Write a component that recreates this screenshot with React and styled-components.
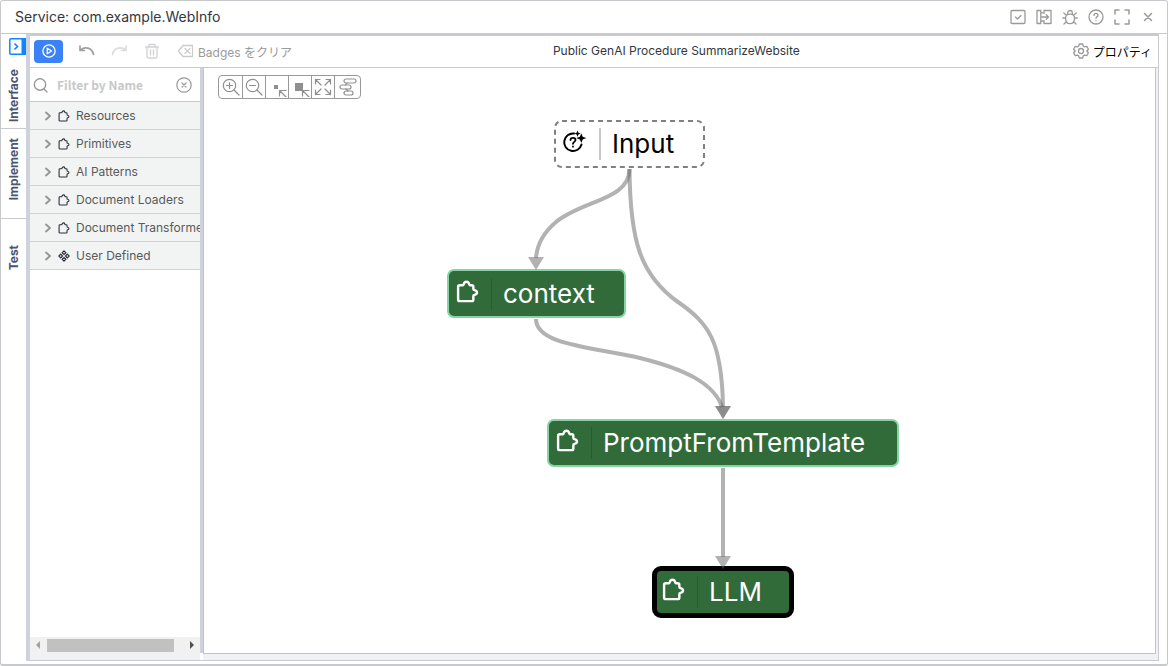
import React, { useState } from "react";
import styled, { createGlobalStyle, css } from "styled-components";

const Global = createGlobalStyle`
  * { box-sizing: border-box; }
  body {
    margin: 0;
    background: #fff;
    font-family: Inter, "Noto Sans CJK JP", sans-serif;
    font-size: 12px;
    color: #3a3f47;
  }
  button { font: inherit; color: inherit; background: none; border: 0; padding: 0; margin: 0; }
  svg { display: block; }
`;

const Window = styled.div`
  display: flex;
  flex-direction: column;
  min-height: 100vh;
  border: 1px solid #c8c9cc;
  border-bottom-width: 2px;
  border-radius: 3px;
`;

const TitleBar = styled.header`
  display: flex;
  align-items: center;
  justify-content: space-between;
  height: 33px;
  padding: 0 11px 0 14px;
  border-bottom: 1px solid #c8cad0;
`;

const Title = styled.h1`
  margin: 0;
  font-size: 14px;
  font-weight: 400;
  line-height: 20px;
  color: #33373d;
`;

const WindowActions = styled.div`
  display: flex;
  gap: 10px;
`;

const IconButton = styled.button`
  display: flex;
  align-items: center;
  justify-content: center;
  width: 16px;
  height: 20px;
  color: #9a9a9a;
`;

const Body = styled.div`
  display: flex;
  flex: 1;
`;

const TabRail = styled.nav`
  display: flex;
  flex-direction: column;
  width: 25px;
  flex: none;
`;

const RailToggle = styled.button`
  align-self: flex-end;
  width: 17px;
  height: 17px;
  margin: 4px 0 8px;
`;

const Tab = styled.button`
  display: flex;
  align-items: center;
  justify-content: center;
  height: ${(p) => p.$height}px;
  padding-bottom: ${(p) => p.$pad || 0}px;
  border-bottom: ${(p) => (p.$last ? "0" : "1px solid #c8cad0")};
  writing-mode: vertical-rl;
  font-size: 12px;
  font-weight: 700;
  line-height: 16px;
  color: #4b5571;
  span { transform: rotate(180deg); }
`;

const Workspace = styled.div`
  flex: 1;
  min-width: 0;
  display: flex;
  flex-direction: column;
  margin: 0 8px 3px 0;
  border-left: 4px solid #cfd2da;
`;

const Editor = styled.div`
  flex: 1;
  display: flex;
  flex-direction: column;
  border: 1px solid #c8cad0;
  border-top-width: 2px;
  border-left: 0;
`;

const Toolbar = styled.div`
  display: flex;
  align-items: center;
  height: 31px;
  padding: 0 6px 1px 4px;
`;

const ToolGroup = styled.div`
  display: flex;
  align-items: center;
  gap: 16px;
`;

const RunButton = styled.button`
  display: flex;
  align-items: center;
  justify-content: center;
  width: 29px;
  height: 23px;
  border-radius: 4px;
  background: #3b82f6;
  color: #fff;
`;

const ToolButton = styled.button`
  display: flex;
  align-items: center;
  gap: 4px;
  height: 24px;
  color: ${(p) => p.$color};
`;

const Caption = styled.h2`
  flex: 1;
  margin: 0;
  padding-right: 12px;
  font-size: 12px;
  font-weight: 400;
  line-height: 16px;
  text-align: center;
  color: #33373d;
`;

const PropertiesButton = styled.button`
  display: flex;
  align-items: center;
  gap: 4px;
  color: #000;
  svg { color: #999; }
`;

const Panes = styled.div`
  flex: 1;
  display: flex;
  border-top: 1px solid #c8cad0;
`;

const Column = styled.div`
  flex: 1;
  min-width: 0;
  display: flex;
  flex-direction: column;
  padding: 0 2px 6px 0;
  background: #f0f1f5;
`;

const Palette = styled.aside`
  display: flex;
  flex-direction: column;
  flex: none;
  width: 170px;
  padding-bottom: 7px;
  background: #f0f1f5;
`;

const PaletteBody = styled.div`
  flex: 1;
  background: #fff;
`;

const SearchRow = styled.div`
  display: flex;
  align-items: center;
  height: 34px;
  padding: 0 8px 0 3px;
  border-bottom: 1px solid #c8cad0;
  color: #999;
`;

const SearchInput = styled.input`
  flex: 1;
  min-width: 0;
  margin: 0 0 0 8px;
  padding: 0;
  border: 0;
  outline: 0;
  background: none;
  font: 700 12px/20px "Noto Sans CJK JP", sans-serif;
  &::placeholder { color: #c8c8c8; opacity: 1; }
`;

const GroupList = styled.ul`
  margin: 0;
  padding: 0;
  list-style: none;
`;

const GroupButton = styled.button`
  display: flex;
  align-items: center;
  width: 100%;
  height: 28px;
  padding-left: 14px;
  overflow: hidden;
  border-bottom: 1px solid #cfd2da;
  background: #f1f4f3;
  font-size: 12px;
  line-height: 16px;
  color: #5a5a5a;
  white-space: nowrap;
  svg { flex: none; }
`;

const GroupIcon = styled.span`
  margin: 0 6px;
  color: #2c2f3a;
`;

const ScrollBar = styled.div`
  display: flex;
  align-items: center;
  height: 16px;
  padding: 0 5px;
  background: #f1f1f1;
`;

const ScrollTrack = styled.div`
  flex: 1;
  margin: 0 15px 0 6px;
`;

const ScrollThumb = styled.div`
  height: 13px;
  background: #c1c1c1;
`;

const Splitter = styled.div`
  flex: none;
  width: 3px;
  margin-bottom: 7px;
  background: #cfd2da;
`;

const Canvas = styled.main`
  position: relative;
  flex: 1;
  overflow: hidden;
  border: 1px solid #c0c3cb;
  border-top: 0;
  background: #fff;
`;

const ZoomBar = styled.div`
  display: inline-flex;
  margin: 7px 0 0 14px;
  border: 1px solid #999;
  border-radius: 4px;
`;

const ZoomButton = styled.button`
  display: flex;
  align-items: center;
  justify-content: center;
  width: 23px;
  height: 22px;
  color: #8f8f8f;
  & + & { border-left: 1px solid #999; }
  &:last-child { width: 26px; }
`;

const Edges = styled.svg`
  position: absolute;
  left: 0;
  top: 0;
`;

const nodeKinds = {
  input: css`
    padding-left: 8px;
    color: #000;
    background: #fff;
  `,
  step: css`
    padding-left: 7px;
    border: 2px solid #86d3a4;
    background: #316b3a;
    color: #fff;
  `,
  selected: css`
    padding-left: 5px;
    border: 5px solid #000;
    border-radius: 9px;
    background: #316b3a;
    color: #fff;
  `,
};

const Node = styled.button`
  position: absolute;
  left: ${(p) => p.$x}px;
  top: ${(p) => p.$y}px;
  width: ${(p) => p.$w}px;
  height: ${(p) => p.$h}px;
  display: flex;
  align-items: center;
  border-radius: 7px;
  ${(p) => nodeKinds[p.$kind]}
`;

const DashedFrame = styled.svg`
  position: absolute;
  inset: 0;
`;

const NodeIcon = styled.span`
  width: 25px;
  margin-bottom: 5px;
`;

const NodeLabel = styled.span`
  margin-left: ${(p) => (p.$light ? 12 : 10)}px;
  padding-left: 11px;
  border-left: ${(p) => (p.$light ? "2px solid #c8c8cc" : "1px solid #2b5a3b")};
  font-size: 26px;
  line-height: 32px;
`;

function Glyph({ size = 16, w, h, box = "0 0 16 16", sw = 1.3, children }) {
  return (
    <svg width={w || size} height={h || size} viewBox={box} fill="none" stroke="currentColor"
      strokeWidth={sw} strokeLinecap="round" strokeLinejoin="round" aria-hidden="true">
      {children}
    </svg>
  );
}

const Puzzle = ({ size, sw }) => (
  <Glyph size={size} box="0 0 22 22" sw={sw}>
    <path d="M3.600 5H6.500C7.200 4.800 7.300 4.400 7.500 3.700C8.300 1 11.700 1 12.500 3.700C12.700 4.400 12.800 4.800 13.500 5H15Q16.600 5 16.600 6.600V8.600C16.600 9.300 17 9.500 17.700 9.700C20.900 10.400 20.900 13.600 17.700 14.300C17 14.500 16.600 14.700 16.600 15.400V18.600Q16.600 20.200 15 20.200H3.600Q2 20.200 2 18.600V6.600Q2 5 3.600 5Z" />
  </Glyph>
);

const Diamonds = () => (
  <svg width="12" height="12" viewBox="0 0 12 12" fill="none" stroke="currentColor" strokeWidth="1.2" aria-hidden="true">
    <path d="M6 .9 7.8 2.7 6 4.5 4.2 2.7ZM2.7 4.2 4.5 6 2.7 7.8.9 6ZM9.3 4.2 11.1 6 9.3 7.8 7.5 6ZM6 7.5 7.8 9.3 6 11.1 4.2 9.3Z" />
  </svg>
);

const titleActions = [
  ["Validate", <Glyph><rect x="1" y="1.5" width="14" height="13" rx="1" /><path d="m5.5 8 2 2 3.5-3.5" /></Glyph>],
  ["Map", <Glyph><path d="M4.8 1.5H1v13h3.8V1.5M4.8 3.8h2M4.8 12h2M8 4.5v-3h7v13H8v-3M6 8h6.5M10.3 5.8 12.5 8l-2.2 2.2" /></Glyph>],
  ["Debug", <Glyph><path d="M3.600 8.800C3.600 3.800 12.400 3.800 12.400 8.800V10c0 6.200-8.800 6.200-8.800 0ZM5.500 5.300C5.500 .2 10.500 .2 10.500 5.300M3.600 9H.8M15.200 9h-2.800M4.500 6.500 1.800 4M11.500 6.500 14.200 4M4.500 12.500 2 15M11.500 12.500 14 15" /></Glyph>],
  ["Help", <Glyph><circle cx="8" cy="8" r="7" /><path d="M6 6.400c0-2.600 4-2.600 4-.1C10 8 8 7.800 8 9.200M8 11.500v.1" /></Glyph>],
  ["Full screen", <Glyph sw="1.500"><path d="M1 5V1h4M11 1h4v4M15 11v4h-4M5 15H1v-4" /></Glyph>],
  ["Close", <Glyph sw="1.500"><path d="m4.500 4.500 7 7m0-7-7 7" /></Glyph>],
];

const groups = ["Resources", "Primitives", "AI Patterns", "Document Loaders", "Document Transformers", "User Defined"];

const zoomTools = [
  ["Zoom in", <Glyph size={18} box="0 0 18 18" sw="1.200"><circle cx="7.500" cy="7.500" r="6.200" /><path d="m12 12 5 5M4.500 7.500h6M7.500 4.500v6" /></Glyph>],
  ["Zoom out", <Glyph size={18} box="0 0 18 18" sw="1.200"><circle cx="7.500" cy="7.500" r="6.200" /><path d="m12 12 5 5M4.500 7.500h6" /></Glyph>],
  ["Shrink", <Glyph w={22} h={20} box="0 0 22 20" sw="1.200"><path d="M8 8h4v4H8Z" fill="currentColor" stroke="none" /><path d="m20 20-6-6M13.500 19v-5.500H20" /></Glyph>],
  ["Actual size", <Glyph w={22} h={20} box="0 0 22 20" sw="1.200"><path d="M6 6h8v8H6Z" fill="currentColor" stroke="none" /><path d="m20 20-6-6M13.500 19v-5.500H20" /></Glyph>],
  ["Fit", <Glyph size={18} box="0 0 18 18" sw="1.200"><path d="M1.500 6V1.500H6M1.500 1.500 7 7M12 1.500h4.500V6M16.500 1.500 11 7M1.500 12v4.500H6M1.500 16.500 7 11M12 16.500h4.500V12M16.500 16.500 11 11" /></Glyph>],
  ["Auto layout", <Glyph size={18} box="0 0 18 18" sw="1.200"><rect x="5" y="1" width="12" height="4" rx="2" /><rect x="1" y="7" width="11" height="4" rx="2" /><rect x="5" y="13" width="9" height="4" rx="2" /><path d="M8 5 6.500 7M7 11l2 2" /></Glyph>],
];

const nodes = [
  { label: "Input", kind: "input", x: 350, y: 52, w: 151, h: 48 },
  { label: "context", kind: "step", x: 243, y: 201, w: 179, h: 49 },
  { label: "PromptFromTemplate", kind: "step", x: 343, y: 351, w: 352, h: 48 },
  { label: "LLM", kind: "selected", x: 448, y: 498, w: 142, h: 52 },
];

const InputGlyph = () => (
  <svg width="25" height="25" viewBox="0 0 25 25" fill="none" stroke="currentColor" strokeWidth="2" strokeLinecap="round" aria-hidden="true">
    <path d="M12 4.500A8.800 8.800 0 1 0 19.500 15.500" />
    <path d="M8.500 11c0-3.200 5-2.700 5 0 0 1.900-2.500 1.900-2.500 3.800M11 17.500v.2" strokeWidth="1.800" />
    <path d="m19.300 4.300 1.400 3.400 3.600 1.400-3.600 1.400-1.400 3.600-1.400-3.600-3.600-1.400 3.600-1.400ZM15.500 1.500l.9 2.200 2.200.9-2.200.9-.9 2.200-.9-2.200-2.200-.9 2.200-.9Z" fill="currentColor" stroke="none" />
  </svg>
);

export default function App() {
  const [filter, setFilter] = useState("");
  return (
    <>
      <Global />
      <Window>
        <TitleBar>
          <Title>Service: com.example.WebInfo</Title>
          <WindowActions>
            {titleActions.map(([name, icon]) => (
              <IconButton key={name} aria-label={name}>{icon}</IconButton>
            ))}
          </WindowActions>
        </TitleBar>
        <Body>
          <TabRail>
            <RailToggle aria-label="Expand">
              <svg width="17" height="17" viewBox="0 0 17 17" fill="none" aria-hidden="true">
                <rect x=".8" y=".8" width="15.400" height="15.400" rx="1" stroke="#0d86ff" strokeWidth="1.500" />
                <path d="M12.500 0H17v17h-4.500Z" fill="#0d86ff" />
                <path d="m5.500 5.500 3 3-3 3" stroke="#0d86ff" strokeWidth="1.600" />
              </svg>
            </RailToggle>
            <Tab $height={66}><span>Interface</span></Tab>
            <Tab $height={90} $pad={8}><span>Implement</span></Tab>
            <Tab $height={78} $last><span>Test</span></Tab>
          </TabRail>
          <Workspace>
            <Editor>
              <Toolbar>
                <ToolGroup>
                  <RunButton aria-label="Run">
                    <Glyph size={14} sw="1.500"><circle cx="8" cy="8" r="7" /><path d="M6 4.800v6.400L11 8Z" /></Glyph>
                  </RunButton>
                  <ToolButton $color="#a0a0a0" aria-label="Undo">
                    <Glyph sw="1.700"><path d="M1 3v4.500h4.500M1.500 7C6 3 13 4.500 14.500 11.500" /></Glyph>
                  </ToolButton>
                  <ToolButton $color="#dcdcdc" aria-label="Redo">
                    <Glyph sw="1.700"><path d="M15 3v4.500h-4.500M14.500 7C10 3 3 4.500 1.500 11.500" /></Glyph>
                  </ToolButton>
                  <ToolButton $color="#d2d2d2" aria-label="Delete">
                    <Glyph w={18}><path d="M1.500 4h13M5 4V1.500h6V4M3 4v9.500Q3 15 4.500 15h7q1.500 0 1.500-1.500V4M6.500 7v5M9.500 7v5" /></Glyph>
                  </ToolButton>
                  <ToolButton $color="#9a9a9a">
                    <Glyph w={17}><path d="M5.500 2.500H15v11H5.500L.8 8ZM7.500 5.500l5 5M12.500 5.500l-5 5" stroke="#cccccc" /></Glyph>
                    Badges をクリア
                  </ToolButton>
                </ToolGroup>
                <Caption>Public GenAI Procedure SummarizeWebsite</Caption>
                <PropertiesButton>
                  <Glyph><path d="M6.300 1h3.400l.6 2.200 1.300.7 2.200-.6 1.600 2.900L13.800 8l1.600 1.800-1.600 2.900-2.200-.6-1.300.7-.6 2.200H6.300l-.6-2.200-1.300-.7-2.200.6L.6 9.800 2.200 8 .6 6.200l1.600-2.900 2.200.6 1.300-.7Z" /><circle cx="8" cy="8" r="2.500" /></Glyph>
                  プロパティ
                </PropertiesButton>
              </Toolbar>
              <Panes>
                <Palette>
                  <PaletteBody>
                    <SearchRow>
                      <Glyph sw="1.400"><circle cx="7" cy="7.500" r="5.700" /><path d="m11 12 3 3" /></Glyph>
                      <SearchInput aria-label="Filter by Name" placeholder="Filter by Name" value={filter} onChange={(e) => setFilter(e.target.value)} />
                      <IconButton aria-label="Clear filter" onClick={() => setFilter("")}>
                        <Glyph sw="1.200"><circle cx="8" cy="8" r="7.200" /><path d="m6 6 4 4m0-4-4 4" /></Glyph>
                      </IconButton>
                    </SearchRow>
                    <GroupList>
                      {groups.map((g) => (
                        <li key={g}>
                          <GroupButton>
                            <Glyph w={8} h={10} box="0 0 8 10" sw="1.800"><path d="m2 1.500 4 3.500-4 3.500" stroke="#949494" /></Glyph>
                            <GroupIcon>{g === "User Defined" ? <Diamonds /> : <Puzzle size={12} sw="2" />}</GroupIcon>
                            {g}
                          </GroupButton>
                        </li>
                      ))}
                    </GroupList>
                  </PaletteBody>
                  <ScrollBar>
                    <svg width="6" height="8" aria-hidden="true"><path d="M5 0v8L1 4Z" fill="#a3a3a3" /></svg>
                    <ScrollTrack><ScrollThumb /></ScrollTrack>
                    <svg width="6" height="8" aria-hidden="true"><path d="M1 0v8l4-4Z" fill="#505050" /></svg>
                  </ScrollBar>
                </Palette>
                <Splitter />
                <Column>
                  <Canvas>
                    <ZoomBar>
                      {zoomTools.map(([name, icon]) => (
                        <ZoomButton key={name} aria-label={name}>{icon}</ZoomButton>
                      ))}
                    </ZoomBar>
                    {nodes.map((n) => (
                      <Node key={n.label} $kind={n.kind} $x={n.x} $y={n.y} $w={n.w} $h={n.h}>
                        {n.kind === "input" && (
                          <DashedFrame width="151" height="48" aria-hidden="true">
                            <rect x="1" y="1" width="149" height="46" rx="7" fill="none" stroke="#808080" strokeWidth="2" strokeDasharray="5 4" />
                          </DashedFrame>
                        )}
                        <NodeIcon>{n.kind === "input" ? <InputGlyph /> : <Puzzle size={23} sw="2.300" />}</NodeIcon>
                        <NodeLabel $light={n.kind === "input"}>{n.label}</NodeLabel>
                      </Node>
                    ))}
                    <Edges width="760" height="580" viewBox="204 68 760 580" fill="none" pointerEvents="none" aria-hidden="true">
                      <g stroke="#666" strokeOpacity=".5" strokeWidth="4">
                        <path d="M629.500 169C629.500 200 583 200 556 222C543 233 537 245 536 258" />
                        <path d="M629.500 169C630 240 640 275 678 302C708 323 722 340 723 407" />
                        <path d="M536 319C536 345 592 347 640 358C684 369 714 383 722 407" />
                        <path d="M723 468V557" />
                      </g>
                      <g fill="#666" fillOpacity=".5">
                        <path d="M528 257h16l-8 13Z" />
                        <path d="M715 406h16l-8 13Z" />
                        <path d="M715 406h16l-8 13Z" />
                        <path d="M715 556h16l-8 13Z" />
                      </g>
                    </Edges>
                  </Canvas>
                </Column>
              </Panes>
            </Editor>
          </Workspace>
        </Body>
      </Window>
    </>
  );
}
